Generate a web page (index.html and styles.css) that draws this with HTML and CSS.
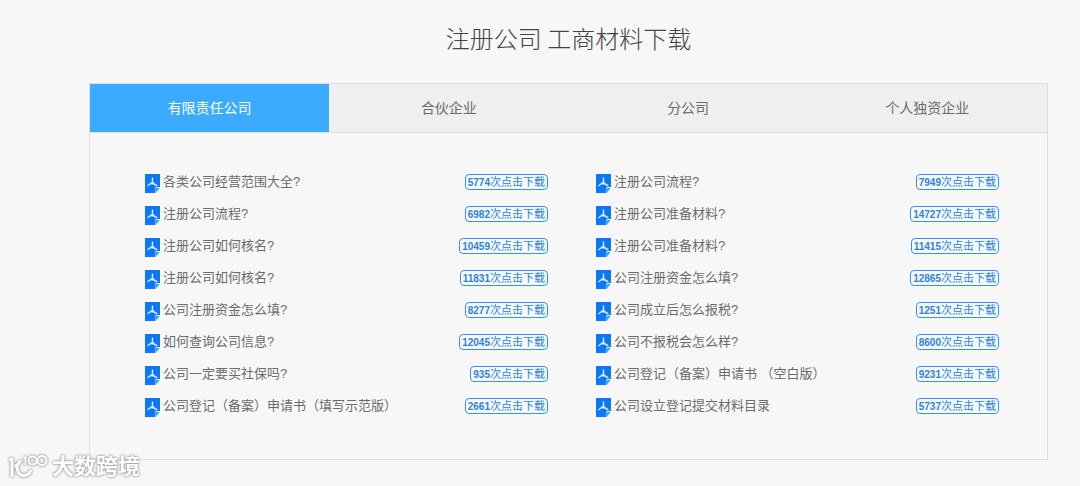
FILE: index.html
```
<!DOCTYPE html>
<html lang="zh-CN">
<head>
    <meta charset="UTF-8">
    <title>注册公司 工商材料下载</title>
    <link rel="stylesheet" href="styles.css">
</head>
<body>
<svg width="0" height="0" class="symbols">
    <symbol id="pdf" viewBox="0 0 15 19">
        <path d="M0 0h15v13h-4.500v6H0z" fill="#0b7af2"/>
        <path d="M11 18.500v-4.500h3.500z" fill="#3d95f5"/>
        <path d="M7.500 4v4L3 11.500M7.500 8c.6 1.600 2.200 2.800 4.300 3.500M5.500 9.800h4" fill="none" stroke="#d8ebff" stroke-width="1.400" stroke-linecap="round"/>
    </symbol>
</svg>
<main class="wrap">
    <h1 class="title">注册公司 工商材料下载</h1>
    <section class="panel">
        <div class="tabs" id="tabs">
            <button type="button" class="tab active">有限责任公司</button>
            <button type="button" class="tab">合伙企业</button>
            <button type="button" class="tab">分公司</button>
            <button type="button" class="tab">个人独资企业</button>
        </div>
        <div class="files">
            <ul class="list">
                <li><svg class="icon"><use href="#pdf"/></svg><span class="name">各类公司经营范围大全?</span><a href="#" class="down"><b>5774</b>次点击下载</a></li>
                <li><svg class="icon"><use href="#pdf"/></svg><span class="name">注册公司流程?</span><a href="#" class="down"><b>6982</b>次点击下载</a></li>
                <li><svg class="icon"><use href="#pdf"/></svg><span class="name">注册公司如何核名?</span><a href="#" class="down"><b>10459</b>次点击下载</a></li>
                <li><svg class="icon"><use href="#pdf"/></svg><span class="name">注册公司如何核名?</span><a href="#" class="down"><b>11831</b>次点击下载</a></li>
                <li><svg class="icon"><use href="#pdf"/></svg><span class="name">公司注册资金怎么填?</span><a href="#" class="down"><b>8277</b>次点击下载</a></li>
                <li><svg class="icon"><use href="#pdf"/></svg><span class="name">如何查询公司信息?</span><a href="#" class="down"><b>12045</b>次点击下载</a></li>
                <li><svg class="icon"><use href="#pdf"/></svg><span class="name">公司一定要买社保吗?</span><a href="#" class="down"><b>935</b>次点击下载</a></li>
                <li><svg class="icon"><use href="#pdf"/></svg><span class="name">公司登记（备案）申请书（填写示范版）</span><a href="#" class="down"><b>2661</b>次点击下载</a></li>
            </ul>
            <ul class="list">
                <li><svg class="icon"><use href="#pdf"/></svg><span class="name">注册公司流程?</span><a href="#" class="down"><b>7949</b>次点击下载</a></li>
                <li><svg class="icon"><use href="#pdf"/></svg><span class="name">注册公司准备材料?</span><a href="#" class="down"><b>14727</b>次点击下载</a></li>
                <li><svg class="icon"><use href="#pdf"/></svg><span class="name">注册公司准备材料?</span><a href="#" class="down"><b>11415</b>次点击下载</a></li>
                <li><svg class="icon"><use href="#pdf"/></svg><span class="name">公司注册资金怎么填?</span><a href="#" class="down"><b>12865</b>次点击下载</a></li>
                <li><svg class="icon"><use href="#pdf"/></svg><span class="name">公司成立后怎么报税?</span><a href="#" class="down"><b>1251</b>次点击下载</a></li>
                <li><svg class="icon"><use href="#pdf"/></svg><span class="name">公司不报税会怎么样?</span><a href="#" class="down"><b>8600</b>次点击下载</a></li>
                <li><svg class="icon"><use href="#pdf"/></svg><span class="name">公司登记（备案）申请书 （空白版）</span><a href="#" class="down"><b>9231</b>次点击下载</a></li>
                <li><svg class="icon"><use href="#pdf"/></svg><span class="name">公司设立登记提交材料目录</span><a href="#" class="down"><b>5737</b>次点击下载</a></li>
            </ul>
        </div>
    </section>
</main>
<div class="mark">
    <svg class="mark-logo" viewBox="0 0 40 28" fill="none" stroke="#fff">
        <path d="M1 6.500h3V24" stroke-width="3"/>
        <path d="M12 7c0 3-2 5-5.500 6.500" stroke-width="3"/>
        <path d="M9 13c0 12 11 12 14 4" stroke-width="3"/>
        <path d="M15.500 4.500h2V12" stroke-width="2"/>
        <circle cx="24.500" cy="7.500" r="4" stroke-width="2"/>
        <circle cx="34" cy="7.500" r="4.500" stroke-width="2"/>
    </svg>
    <span>大数跨境</span>
</div>
</body>
</html>
```
FILE: styles.css
```
* {
    box-sizing: border-box;
}
body {
    margin: 0;
    background: #f7f7f7;
    color: #6c6c6c;
    font-family: "Liberation Sans", "Noto Sans CJK SC", sans-serif;
    font-size: 13px;
}
.symbols {
    position: absolute;
}
.wrap {
    padding: 19px 32px 25px 89px;
}
.title {
    margin: 0 0 26px;
    color: #444;
    font-family: "Noto Sans CJK SC Light", "Noto Sans CJK SC", sans-serif;
    font-size: 24px;
    font-weight: 300;
    line-height: 38px;
    text-align: center;
}
.panel {
    border: 1px solid #e0e0e0;
}
.tabs {
    display: grid;
    grid-template-columns: repeat(4, 1fr);
    background: #efefef;
    border-bottom: 1px solid #e0e0e0;
}
.tab {
    height: 48px;
    padding: 0 0 2px;
    border: 0;
    background: none;
    color: #6c6c6c;
    font: inherit;
    font-size: 14px;
    cursor: pointer;
}
.tab.active {
    background: #3cabff;
    color: #fff;
}
.files {
    display: grid;
    grid-template-columns: 1fr 1fr;
    gap: 48px;
    padding: 33px 48px 37px 55px;
}
.list {
    margin: 0;
    padding: 0;
    list-style: none;
}
.list li {
    display: flex;
    align-items: center;
    height: 32px;
}
.icon {
    width: 15px;
    height: 19px;
    margin: 3px 3px 0 0;
}
.name {
    flex: 1;
    padding-bottom: 3px;
    white-space: nowrap;
}
.down {
    height: 16px;
    padding: 0 2px;
    border: 1px solid #3c8df0;
    border-radius: 4px;
    background: #f5faff;
    color: #2f80e0;
    font-size: 11px;
    line-height: 14px;
    text-decoration: none;
    white-space: nowrap;
}
.down b {
    font-size: 10px;
}
/* watermark over the page corner */
.mark {
    position: absolute;
    left: 8px;
    bottom: 4px;
    display: flex;
    align-items: center;
    gap: 4px;
    color: #fff;
    font-size: 22px;
    font-weight: bold;
    line-height: 30px;
    filter: drop-shadow(0 0 1px #999) drop-shadow(0 0 1px #bbb);
}
.mark-logo {
    width: 40px;
    height: 28px;
}
```
